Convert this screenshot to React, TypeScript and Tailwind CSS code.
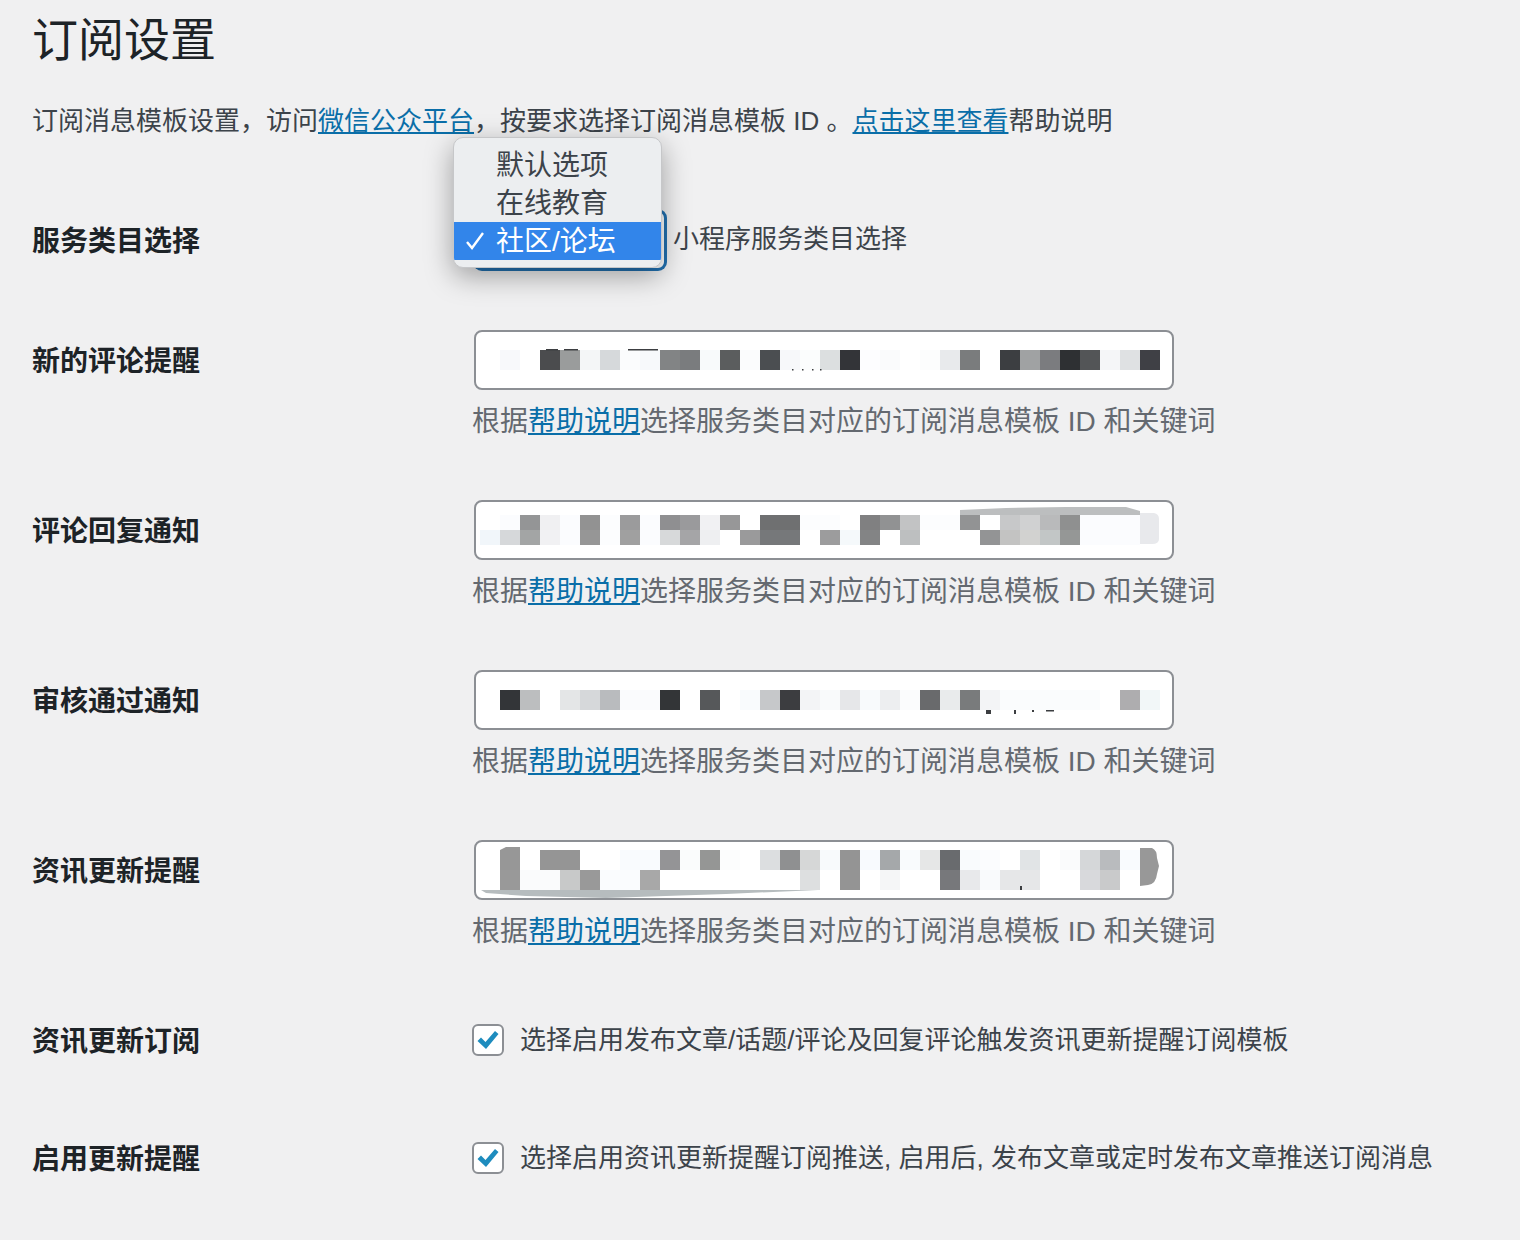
// 打码的方块: [列, 颜色]
type Cell = [number, string]
type Mosaic = { y: number; h: number; cells: Cell[] }

const FONT = "font-['Liberation_Sans','Noto_Sans_CJK_SC',sans-serif]"

const mosaics: { rows: Mosaic[]; extra?: React.ReactNode }[] = [
    {
        rows: [{
            y: 18, h: 20, cells: [[0, "#f8f9fb"], [2, "#4b4c4e"], [3, "#9a9c9c"], [4, "#f4f6f7"], [5, "#d6d9db"], [6, "#fbfcfd"], [7, "#f7f9fb"], [8, "#828485"], [9, "#7a7c7e"], [10, "#f8fafb"], [11, "#5b5d5e"], [12, "#fbfcfd"], [13, "#4b4e51"], [14, "#f7f8fa"], [15, "#fbfdfd"], [16, "#dcdfe0"], [17, "#333438"], [18, "#fdfdff"], [19, "#fafbfc"], [21, "#fcfdfd"], [22, "#e8eaec"], [23, "#7a7c7d"], [25, "#3c3e41"], [26, "#a0a2a3"], [27, "#7b7c7f"], [28, "#2e3033"], [29, "#535557"], [30, "#f5f6f8"], [31, "#dfe1e3"], [32, "#3f4045"]],
        }],
        extra: (
            <g fill="#3c3e41">
                <rect x="70" y="17" width="12" height="1.5" />
                <rect x="88" y="17" width="14" height="1.5" />
                <rect x="152" y="17" width="30" height="1.5" />
                <rect x="316" y="37" width="1.5" height="1.5" />
                <rect x="326" y="37" width="1.5" height="1.5" />
                <rect x="336" y="37" width="1.5" height="1.5" />
                <rect x="344" y="37" width="1.5" height="1.5" />
            </g>
        ),
    },
    {
        rows: [
            {
                y: 13, h: 15, cells: [[0, "#fbfcfe"], [1, "#949596"], [2, "#f0f0f2"], [3, "#fbfcfe"], [4, "#929292"], [5, "#fcfdfe"], [6, "#9b9b9c"], [7, "#fbfcfe"], [8, "#8f8f91"], [9, "#9a9a9c"], [10, "#f1f1f3"], [11, "#979798"], [13, "#6f7071"], [14, "#6f7071"], [15, "#fcfdfe"], [16, "#fcfdfe"], [18, "#808081"], [19, "#919293"], [20, "#c2c3c4"], [21, "#fcfdfe"], [22, "#fcfdfe"], [23, "#929394"], [25, "#c7c8c9"], [26, "#d0d1d2"], [27, "#b9babb"], [28, "#8f9090"], [29, "#fbfcfe"], [30, "#fbfcfe"], [31, "#fbfcfe"]],
            },
            {
                y: 28, h: 15, cells: [[-1, "#f1f6fa"], [0, "#d6d8da"], [1, "#a3a5a5"], [2, "#f1f1f3"], [3, "#fbfcfe"], [4, "#969696"], [5, "#fcfdfe"], [6, "#a0a0a0"], [7, "#fbfcfe"], [8, "#d7d9da"], [9, "#a5a5a7"], [10, "#eeeff1"], [12, "#9a9a9b"], [13, "#76787a"], [14, "#76787a"], [16, "#9c9c9d"], [17, "#f5f9fb"], [18, "#838485"], [20, "#bdbfc0"], [24, "#939495"], [25, "#c3c3c2"], [26, "#d2d2d0"], [27, "#c2c6c6"], [28, "#959796"], [29, "#fbfcfe"], [30, "#fbfcfe"], [31, "#fbfcfe"]],
            },
        ],
        extra: (
            <g>
                <path d="M484 13 L484 8 L530 6 L590 5 L650 5 L664 9 L664 13 Z" fill="#bcbebf" />
                <path d="M664 11 L678 11 Q683 12 683 17 L683 37 Q683 42 676 42 L664 42 Z" fill="#e8e9ec" />
            </g>
        ),
    },
    {
        rows: [{
            y: 18, h: 20, cells: [[0, "#333538"], [1, "#bcbebf"], [3, "#e4e6e7"], [4, "#d6d8da"], [5, "#b9bbbe"], [6, "#fafbfd"], [7, "#fafbfd"], [8, "#333537"], [10, "#56585a"], [12, "#f9fbfd"], [13, "#c6c8ca"], [14, "#3c3d40"], [15, "#f3f4f6"], [16, "#f9fafb"], [17, "#e6e7e9"], [18, "#f8fafc"], [19, "#edeef0"], [20, "#fbfcfd"], [21, "#696a6c"], [22, "#e9ebec"], [23, "#797b7c"], [24, "#f3f4f6"], [25, "#fafcfd"], [26, "#fafcfd"], [27, "#fafcfd"], [28, "#fafcfd"], [29, "#fafcfd"], [31, "#aeadaf"], [32, "#f2f7f8"]],
        }],
        extra: (
            <g fill="#3c3e41">
                <rect x="510" y="38" width="5" height="4" />
                <rect x="538" y="38" width="2" height="4" />
                <rect x="556" y="38" width="2" height="2" />
                <rect x="570" y="38" width="8" height="1.5" />
            </g>
        ),
    },
    {
        rows: [
            {
                y: 8, h: 20, cells: [[0, "#979797"], [2, "#959595"], [3, "#959595"], [6, "#f9fbfe"], [7, "#f9fbfe"], [8, "#949496"], [9, "#fafcfc"], [10, "#959695"], [11, "#fcfdfd"], [13, "#dcdee0"], [14, "#8f9091"], [15, "#d6d7d7"], [16, "#f8fafc"], [17, "#949494"], [18, "#f8fafe"], [19, "#a5a8aa"], [20, "#f9fbfd"], [21, "#e6e7e7"], [22, "#696b6e"], [23, "#f9fbfd"], [24, "#fbfcfe"], [26, "#e1e4e6"], [28, "#fafbfc"], [29, "#d5d7d9"], [30, "#b9bbbe"], [31, "#f9fbfe"]],
            },
            {
                y: 28, h: 20, cells: [[0, "#999999"], [1, "#fafbfc"], [2, "#fafbfc"], [3, "#c8c9c9"], [4, "#999999"], [5, "#fafcfe"], [6, "#fafcfe"], [7, "#a8a8a8"], [15, "#dddfe0"], [17, "#949494"], [19, "#f5f6f7"], [22, "#77787b"], [23, "#e8e9eb"], [24, "#f9fafc"], [25, "#e6e7e8"], [26, "#e6e7e8"], [29, "#d8d9dc"], [30, "#c9cacb"]],
            },
        ],
        extra: (
            <g>
                <path d="M5 48 L342 48 L250 52 L130 56 L50 54 L10 51 Z" fill="#b6bcbe" />
                <path d="M24 8 L30 5 L44 5 L44 8 Z" fill="#979797" />
                <path d="M664 6 L676 6 Q681 8 681 16 L683 24 L681 32 Q680 42 672 43 L664 44 Z" fill="#989898" />
                <rect x="544" y="44" width="2" height="4" fill="#3c3e41" />
            </g>
        ),
    },
]

function MosaicInput({ index }: { index: number }) {
    const m = mosaics[index]
    return (
        <div className="relative h-[60px] w-[700px] overflow-hidden rounded-lg border-2 border-[#8c8f94] bg-white">
            <svg width="696" height="56" viewBox="0 0 696 56" className="absolute left-0 top-0">
                {m.rows.map((row) =>
                    row.cells.map(([col, color]) => (
                        <rect key={`${row.y}-${col}`} x={24 + col * 20} y={row.y} width="20" height={row.h} fill={color} />
                    ))
                )}
                {m.extra}
            </svg>
        </div>
    )
}

function Label({ text }: { text: string }) {
    return <div className="flex h-[60px] w-[440px] shrink-0 items-center pt-[4px] text-[28px] font-semibold text-[#1d2327]">{text}</div>
}

function TemplateRow({ label, index }: { label: string; index: number }) {
    return (
        <div className="mb-[58px] flex">
            <Label text={label} />
            <div>
                <div className="ml-[2px]"><MosaicInput index={index} /></div>
                <p className="mt-[12px] text-[28px] leading-[40px] text-[#646970]">
                    根据<a className="text-[#0a6ea8] underline">帮助说明</a>选择服务类目对应的订阅消息模板 ID 和关键词
                </p>
            </div>
        </div>
    )
}

function CheckRow({ label, text }: { label: string; text: string }) {
    return (
        <div className="mb-[58px] flex">
            <Label text={label} />
            <div className="flex h-[60px] items-center">
                <div className="flex h-[32px] w-[32px] items-center justify-center rounded-md border-2 border-[#8c8f94] bg-white">
                    <svg width="24" height="22" viewBox="0 0 24 22">
                        <path d="M1.5 12 L5 8.5 L9.5 13 L19 2 L22.5 5 L10 20 Z" fill="#1e8cbe" />
                    </svg>
                </div>
                <span className="ml-[16px] text-[26px] text-[#3c434a]">{text}</span>
            </div>
        </div>
    )
}

export default function App() {
    return (
        <div className={`h-[1240px] w-[1520px] overflow-hidden bg-[#f0f0f1] pl-[32px] pt-[10px] ${FONT}`}>
            <h1 className="h-[60px] text-[46px] leading-[60px] font-normal text-[#1d2327]">订阅设置</h1>
            <p className="mt-[31px] h-[40px] text-[26px] leading-[40px] text-[#3c434a]">
                订阅消息模板设置，访问<a className="text-[#0a6ea8] underline">微信公众平台</a>，按要求选择订阅消息模板 ID 。<a className="text-[#0a6ea8] underline">点击这里查看</a>帮助说明
            </p>

            <div className="mb-[60px] mt-[69px] flex">
                <Label text="服务类目选择" />
                <div className="ml-[2px] flex h-[60px] items-center">
                    <div className="relative h-[60px] w-[192px] rounded-lg border-2 border-[#2271b1] bg-white shadow-[0_0_0_1px_#2271b1]">
                        {/* 展开中的下拉菜单 */}
                        <div className="absolute left-[-23px] top-[-75px] h-[131px] w-[209px] overflow-hidden rounded-[10px] border border-[#c6c7c9] bg-[#eceef0] pt-[8px] text-[28px] leading-[40px] text-[#3c434a] shadow-[0_8px_28px_rgba(0,0,0,0.35)]">
                            <div className="h-[38px] pl-[42px]">默认选项</div>
                            <div className="h-[38px] pl-[42px]">在线教育</div>
                            <div className="relative h-[38px] bg-[#3285ea] pl-[42px] text-white">
                                <svg width="20" height="20" viewBox="0 0 20 20" className="absolute left-[11px] top-[9px]">
                                    <path d="M2 11 L7 17 L18 2" fill="none" stroke="#ffffff" strokeWidth="2.4" />
                                </svg>
                                社区/论坛
                            </div>
                        </div>
                    </div>
                    <span className="mb-[2px] ml-[7px] text-[26px] text-[#3c434a]">小程序服务类目选择</span>
                </div>
            </div>

            <TemplateRow label="新的评论提醒" index={0} />
            <TemplateRow label="评论回复通知" index={1} />
            <TemplateRow label="审核通过通知" index={2} />
            <TemplateRow label="资讯更新提醒" index={3} />

            <CheckRow label="资讯更新订阅" text="选择启用发布文章/话题/评论及回复评论触发资讯更新提醒订阅模板" />
            <CheckRow label="启用更新提醒" text="选择启用资讯更新提醒订阅推送, 启用后, 发布文章或定时发布文章推送订阅消息" />
        </div>
    )
}
